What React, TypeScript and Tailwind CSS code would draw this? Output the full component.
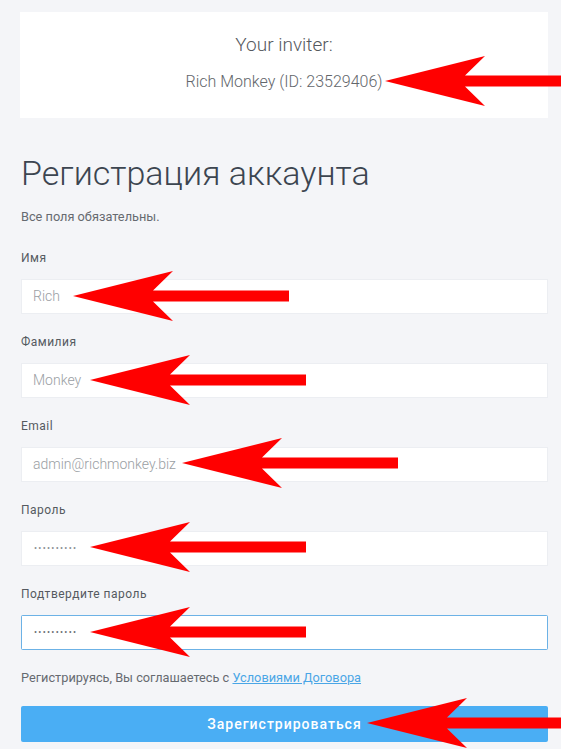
import React from "react";

type Arrow = { x: number; y: number; end: number };

const arrows: Arrow[] = [
  { x: 385, y: 81, end: 561 },
  { x: 73, y: 296, end: 289 },
  { x: 90, y: 380, end: 306 },
  { x: 182, y: 463, end: 398 },
  { x: 90, y: 547, end: 306 },
  { x: 90, y: 632, end: 306 },
  { x: 367, y: 723, end: 561 },
];

function arrowPoints(a: Arrow) {
  const h = 5.5;
  return [
    [a.x, a.y],
    [a.x + 100, a.y - 25],
    [a.x + 80, a.y - h],
    [a.end, a.y - h],
    [a.end, a.y + h],
    [a.x + 80, a.y + h],
    [a.x + 100, a.y + 25],
  ]
    .map((p) => p.join(","))
    .join(" ");
}

function Field({
  label,
  value,
  password,
  focused,
}: {
  label: string;
  value: string;
  password?: boolean;
  focused?: boolean;
}) {
  return (
    <div className="flex flex-col">
      <div className="h-[16px] text-[12px] leading-[16px] tracking-[0.5px] text-[#555a60]">{label}</div>
      {focused ? (
        <div className="mt-[13px] flex h-[35px] rounded-[2px] bg-[#6cb2e6] p-[1px]">
          <div className="flex flex-1 items-center bg-white px-[11px]">
            <span className="pl-[1px] text-[9px] leading-none tracking-[1.3px] text-[#6a6e73]">••••••••••</span>
          </div>
        </div>
      ) : (
        <div className="mt-[13px] flex h-[35px] bg-[#eceef2] p-[1px]">
          <div className="flex flex-1 items-center bg-white px-[11px]">
            {password ? (
              <span className="pl-[1px] text-[9px] leading-none tracking-[1.3px] text-[#8a8e93]">••••••••••</span>
            ) : (
              <span className="text-[14px] font-light text-[#9a9ea3]">{value}</span>
            )}
          </div>
        </div>
      )}
    </div>
  );
}

export default function App() {
  return (
    <div
      className="relative h-[749px] w-[561px] overflow-hidden bg-[#f4f5f8]"
      style={{ fontFamily: "Roboto, 'Noto Sans', sans-serif" }}
    >
      <div className="flex flex-col pl-[21px] pr-[13px]">
        <div className="mt-[12px] -ml-[1px] flex h-[106px] flex-col items-center bg-white pt-[21px]">
          <div className="h-[24px] text-[19px] font-light leading-[24px] text-[#55595e]">Your inviter:</div>
          <div className="mt-[15px] h-[20px] text-[16px] font-light leading-[20px] text-[#62666b]">
            Rich Monkey (ID: 23529406)
          </div>
        </div>

        <h1 className="mt-[33px] h-[44px] text-[34px] font-light leading-[44px] text-[#3c4550]">
          Регистрация аккаунта
        </h1>
        <div className="mt-[14px] h-[16px] text-[12.75px] leading-[16px] text-[#666a70]">Все поля обязательны.</div>

        <div className="mt-[25px] flex flex-col gap-[20px]">
          <Field label="Имя" value="Rich" />
          <Field label="Фамилия" value="Monkey" />
          <Field label="Email" value="admin@richmonkey.biz" />
          <Field label="Пароль" value="" password />
          <Field label="Подтвердите пароль" value="" password focused />
        </div>

        <div className="mt-[20px] h-[16px] text-[12.75px] leading-[16px] text-[#666a70]">
          Регистрируясь, Вы соглашаетесь с{" "}
          <a href="#" className="text-[#4aa6e6] underline">
            Условиями Договора
          </a>
        </div>

        <button className="mt-[20px] flex h-[36px] items-center justify-center rounded-[2px] bg-[#4aaef4] text-[14px] font-medium tracking-[1px] text-white">
          Зарегистрироваться
        </button>
      </div>

      <svg className="pointer-events-none absolute inset-0" width="561" height="749" viewBox="0 0 561 749">
        {arrows.map((a, i) => (
          <polygon key={i} points={arrowPoints(a)} fill="#ff0000" />
        ))}
      </svg>
    </div>
  );
}
